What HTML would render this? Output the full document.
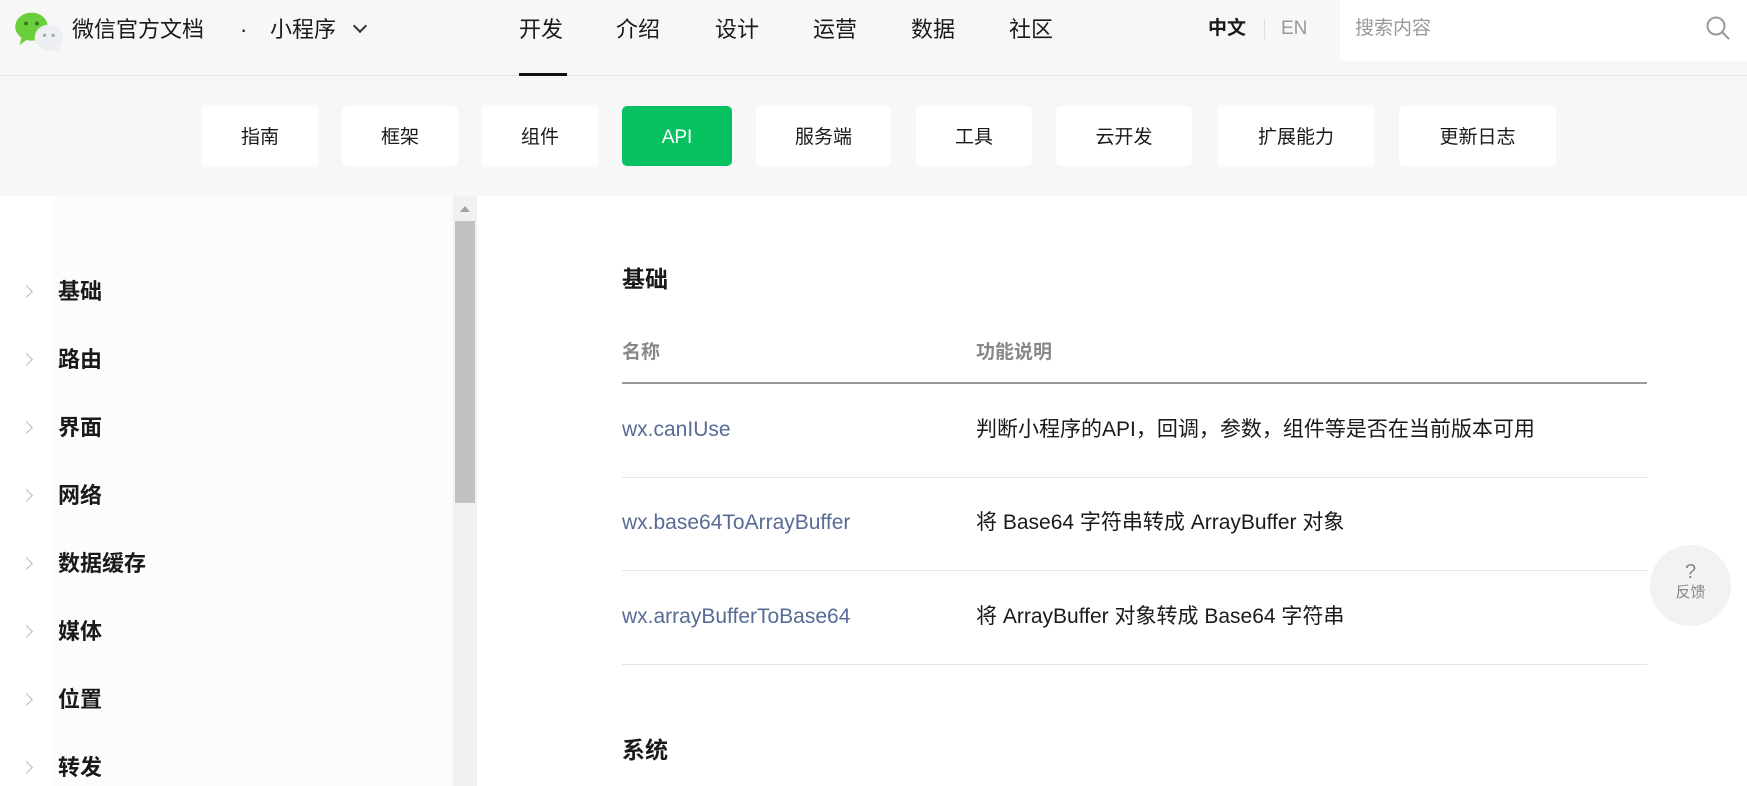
<!DOCTYPE html>
<html><head><meta charset="utf-8"><style>
*{margin:0;padding:0;box-sizing:border-box}
body{width:1747px;height:786px;overflow:hidden;background:#fff;font-family:"Liberation Sans","Noto Sans CJK SC",sans-serif;color:#1a1a1a;position:relative}
.a{position:absolute;white-space:nowrap}
#hdr{left:0;top:0;width:1747px;height:76px;background:#f7f7f7;border-bottom:1px solid #e5e5e5}
#sub{left:0;top:76px;width:1747px;height:120px;background:#f7f7f7}
.btn{position:absolute;top:106px;height:60px;background:#fff;border-radius:5px;font-size:19px;line-height:64px;text-align:center;color:#1a1a1a}
.nav{top:13px;font-size:22px;line-height:34px;color:#1a1a1a}
.side{left:58px;font-size:22px;font-weight:bold;color:#1a1a1a;line-height:30px}
.chev{left:22px;width:9px;height:9px;border-right:1.5px solid #bbb;border-top:1.5px solid #bbb;transform:rotate(45deg)}
.row{left:622px;font-size:21px;color:#576b95;line-height:28px}
.desc{left:976px;font-size:21px;color:#1a1a1a;line-height:28px}
.ln{left:622px;width:1025px;height:1px;background:#e5e5e5}
</style></head><body>
<div class="a" id="hdr"></div>
<svg class="a" style="left:12px;top:9px" width="52" height="44" viewBox="0 0 48 40">
<ellipse cx="18" cy="16" rx="15" ry="13" fill="#6bcf3c"/><path d="M9 25 L7 33 L15 27Z" fill="#6bcf3c"/>
<circle cx="13" cy="13" r="1.8" fill="#2a7d18"/><circle cx="23" cy="13" r="1.8" fill="#2a7d18"/>
<ellipse cx="34" cy="26" rx="13" ry="12" fill="#eceef2"/><path d="M40 35 L44 40 L44 32Z" fill="#eceef2"/>
<circle cx="30" cy="24" r="1.5" fill="#9aa"/><circle cx="38" cy="24" r="1.5" fill="#9aa"/></svg>
<div class="a" style="left:72px;top:13px;font-size:22px;line-height:34px;color:#1a1a1a">微信官方文档</div>
<div class="a" style="left:240px;top:13px;font-size:22px;line-height:34px">·</div>
<div class="a" style="left:270px;top:13px;font-size:22px;line-height:34px">小程序</div>
<div class="a" style="left:355px;top:21px;width:10px;height:10px;border-right:2px solid #333;border-bottom:2px solid #333;transform:rotate(45deg)"></div>
<div class="a nav" style="left:519px">开发</div>
<div class="a" style="left:519px;top:73px;width:48px;height:3px;background:#111"></div>
<div class="a nav" style="left:616px">介绍</div>
<div class="a nav" style="left:715px">设计</div>
<div class="a nav" style="left:813px">运营</div>
<div class="a nav" style="left:911px">数据</div>
<div class="a nav" style="left:1009px">社区</div>
<div class="a" style="left:1208px;top:15px;font-size:19px;font-weight:bold;line-height:28px">中文</div>
<div class="a" style="left:1264px;top:19px;width:1px;height:20px;background:#ddd"></div>
<div class="a" style="left:1281px;top:15px;font-size:19px;color:#999;line-height:28px">EN</div>
<div class="a" style="left:1340px;top:0;width:407px;height:61px;background:#fff;border-radius:0 0 0 4px"></div>
<div class="a" style="left:1355px;top:14px;font-size:19px;color:#999;line-height:30px">搜索内容</div>
<svg class="a" style="left:1704px;top:14px" width="28" height="28" viewBox="0 0 28 28"><circle cx="12" cy="12" r="8.5" fill="none" stroke="#999" stroke-width="2"/><path d="M18 18 L25 25" stroke="#999" stroke-width="2"/></svg>
<div class="a" id="sub"></div>
<div class="btn" style="left:202px;width:116px">指南</div>
<div class="btn" style="left:342px;width:116px">框架</div>
<div class="btn" style="left:482px;width:116px">组件</div>
<div class="btn" style="left:622px;width:110px;background:#07c160;color:#fff">API</div>
<div class="btn" style="left:756px;width:135px">服务端</div>
<div class="btn" style="left:916px;width:116px">工具</div>
<div class="btn" style="left:1056px;width:136px">云开发</div>
<div class="btn" style="left:1218px;width:156px">扩展能力</div>
<div class="btn" style="left:1399px;width:157px">更新日志</div>
<div class="a" style="left:53px;top:196px;width:400px;height:590px;background:#fcfcfc"></div>
<div class="a" style="left:453px;top:196px;width:24px;height:590px;background:#f1f1f1"></div>
<div class="a" style="left:455px;top:221px;width:20px;height:282px;background:#c1c1c1"></div>
<div class="a" style="left:460px;top:206px;width:0;height:0;border-left:5px solid transparent;border-right:5px solid transparent;border-bottom:6px solid #a3a3a3"></div>
<div class="a chev" style="top:287px"></div><div class="a side" style="top:277px">基础</div>
<div class="a chev" style="top:355px"></div><div class="a side" style="top:345px">路由</div>
<div class="a chev" style="top:423px"></div><div class="a side" style="top:413px">界面</div>
<div class="a chev" style="top:491px"></div><div class="a side" style="top:481px">网络</div>
<div class="a chev" style="top:559px"></div><div class="a side" style="top:549px">数据缓存</div>
<div class="a chev" style="top:627px"></div><div class="a side" style="top:617px">媒体</div>
<div class="a chev" style="top:695px"></div><div class="a side" style="top:685px">位置</div>
<div class="a chev" style="top:763px"></div><div class="a side" style="top:753px">转发</div>
<div class="a" style="left:622px;top:263px;font-size:23px;font-weight:bold;line-height:32px">基础</div>
<div class="a" style="left:622px;top:339px;font-size:19px;font-weight:bold;color:#888;line-height:28px">名称</div>
<div class="a" style="left:976px;top:339px;font-size:19px;font-weight:bold;color:#888;line-height:28px">功能说明</div>
<div class="a" style="left:622px;top:382px;width:1025px;height:2px;background:#999"></div>
<div class="a row" style="top:416px">wx.canIUse</div>
<div class="a desc" style="top:416px">判断小程序的API，回调，参数，组件等是否在当前版本可用</div>
<div class="a ln" style="top:477px"></div>
<div class="a row" style="top:509px">wx.base64ToArrayBuffer</div>
<div class="a desc" style="top:509px">将 Base64 字符串转成 ArrayBuffer 对象</div>
<div class="a ln" style="top:570px"></div>
<div class="a row" style="top:603px">wx.arrayBufferToBase64</div>
<div class="a desc" style="top:603px">将 ArrayBuffer 对象转成 Base64 字符串</div>
<div class="a ln" style="top:664px"></div>
<div class="a" style="left:622px;top:734px;font-size:23px;font-weight:bold;line-height:32px">系统</div>
<div class="a" style="left:1650px;top:545px;width:81px;height:81px;border-radius:50%;background:#f2f2f2;text-align:center;color:#888">
<div style="font-size:20px;line-height:22px;margin-top:16px">?</div><div style="font-size:15px;line-height:20px">反馈</div></div>
</body></html>
